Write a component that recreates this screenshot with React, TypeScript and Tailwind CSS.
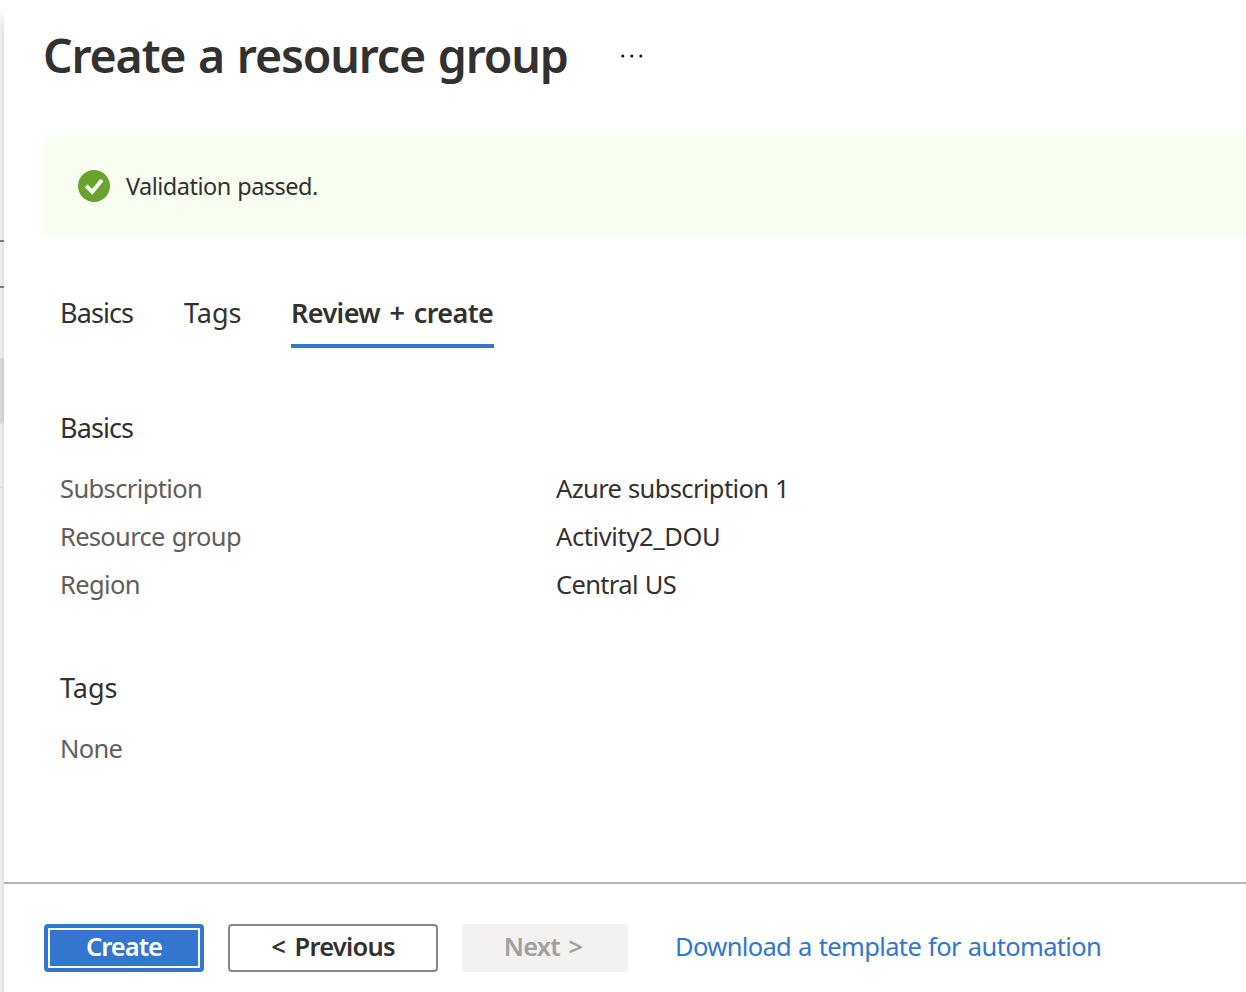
import React from "react";

const details = [
  { label: "Subscription", value: "Azure subscription 1", labelTracking: "tracking-[-0.62px]", valueTracking: "tracking-[-0.62px] [word-spacing:0.6px]" },
  { label: "Resource group", value: "Activity2_DOU", labelTracking: "tracking-[-0.7px] [word-spacing:1.2px]", valueTracking: "tracking-[-0.38px]" },
  { label: "Region", value: "Central US", labelTracking: "tracking-[-0.62px]", valueTracking: "tracking-[-0.65px] [word-spacing:1px]" },
];

function UnderlyingEdge() {
  return (
    <div aria-hidden="true" className="w-1 shrink-0 pt-2">
      <div className="flex h-full flex-col bg-linear-to-r from-[#efefef] to-[#e2e2e2]">
        <div className="h-[232px] bg-linear-to-b from-white to-transparent to-10%" />
        <div className="h-0.5 bg-[#7d7c7b]" />
        <div className="h-11" />
        <div className="h-0.5 bg-[#7d7c7b]" />
        <div className="h-[70px]" />
        <div className="h-16 bg-linear-to-r from-[#dbdad8] to-[#d0cecb]" />
        <div className="h-0.5 bg-[#dadada]" />
        <div className="h-[62px]" />
        <div className="h-0.5 bg-[#d9d9d9]" />
      </div>
    </div>
  );
}

function SuccessIcon() {
  return (
    <svg width="32" height="32" viewBox="0 0 32 32" fill="none">
      <circle cx="16" cy="16" r="16" fill="#6aa22e" />
      <path d="M8.2 15.8 L14.3 21.8 L24 10" stroke="white" strokeWidth="3.9" />
    </svg>
  );
}

export default function App() {
  return (
    <div className="flex h-[992px] w-[1246px] overflow-hidden bg-white font-['Noto_Sans','Open_Sans',sans-serif] text-[25.5px] whitespace-nowrap text-[#323130]">
      <UnderlyingEdge />
      <main className="flex min-w-0 flex-1 flex-col">
        <header className="flex h-[136px] items-start pl-10">
          <h1 className="w-[576px] text-[46.5px] leading-[110px] font-semibold tracking-[-1.17px] [word-spacing:1.8px] -indent-px">Create a resource group</h1>
          <button aria-label="More actions" className="mt-[54px]">
            <svg width="24" height="4" viewBox="0 0 24 4" fill="#111">
              <circle cx="2.8" cy="2" r="1.5" />
              <circle cx="11.8" cy="2" r="1.5" />
              <circle cx="20.8" cy="2" r="1.5" />
            </svg>
          </button>
        </header>

        <div className="ml-10 flex h-[100px] items-center gap-4 rounded-l-sm bg-[#f9fff0] pl-[34px]">
          <SuccessIcon />
          <p className="pt-0.5 text-[23.5px] tracking-[-0.52px] [word-spacing:1px]">Validation passed.</p>
        </div>

        <nav className="mt-14 flex h-14 gap-[50px] pl-14 text-[27px] leading-[41px]">
          <button className="w-[74px] text-left tracking-[-0.91px]">
            <span className="block h-full">Basics</span>
          </button>
          <button className="w-[57px] text-left">
            <span className="block h-full">Tags</span>
          </button>
          <button className="w-[203px] border-b-4 border-[#3277cd] text-left font-semibold tracking-[-0.6px] [word-spacing:3px]">
            <span className="block h-full">Review + create</span>
          </button>
        </nav>

        <section className="mt-[60px] pl-14">
          <h2 className="mb-4 h-10 text-[27px] leading-[39px] tracking-[-0.91px]">Basics</h2>
          <dl>
            {details.map((d) => (
              <div key={d.label} className="flex h-12 items-center">
                <dt className={`w-[496px] text-[#605e5c] ${d.labelTracking}`}>{d.label}</dt>
                <dd className={d.valueTracking}>{d.value}</dd>
              </div>
            ))}
          </dl>
        </section>

        <section className="mt-[60px] pl-14">
          <h2 className="mb-4 h-10 text-[27px] leading-[39px]">Tags</h2>
          <p className="h-12 leading-[48px] tracking-[-0.7px] text-[#605e5c]">None</p>
        </section>

        <footer className="mt-auto flex h-[110px] items-start border-t-2 border-[#b5b4b3] pt-10 pl-10 font-semibold">
          <button className="flex h-12 w-40 rounded-sm bg-[#3277cd] p-1 text-white">
            <span className="flex h-full w-full items-center justify-center border-2 border-white pb-1 tracking-[-1px]">Create</span>
          </button>
          <button className="ml-6 flex h-12 w-[210px] items-center justify-center rounded-sm border-2 border-[#8a8886] pb-1 tracking-[-0.78px] [word-spacing:3.6px]">
            &lt; Previous
          </button>
          <button disabled className="ml-6 flex h-12 w-[166px] items-center justify-center rounded-sm bg-[#f3f2f1] pr-1 pb-1 tracking-[-0.8px] text-[#a19f9d] [word-spacing:2.8px]">
            Next &gt;
          </button>
          <a href="#" className="ml-[47px] leading-[44px] font-normal tracking-[-0.65px] text-[#3277cd] [word-spacing:1px]">
            Download a template for automation
          </a>
        </footer>
      </main>
    </div>
  );
}
